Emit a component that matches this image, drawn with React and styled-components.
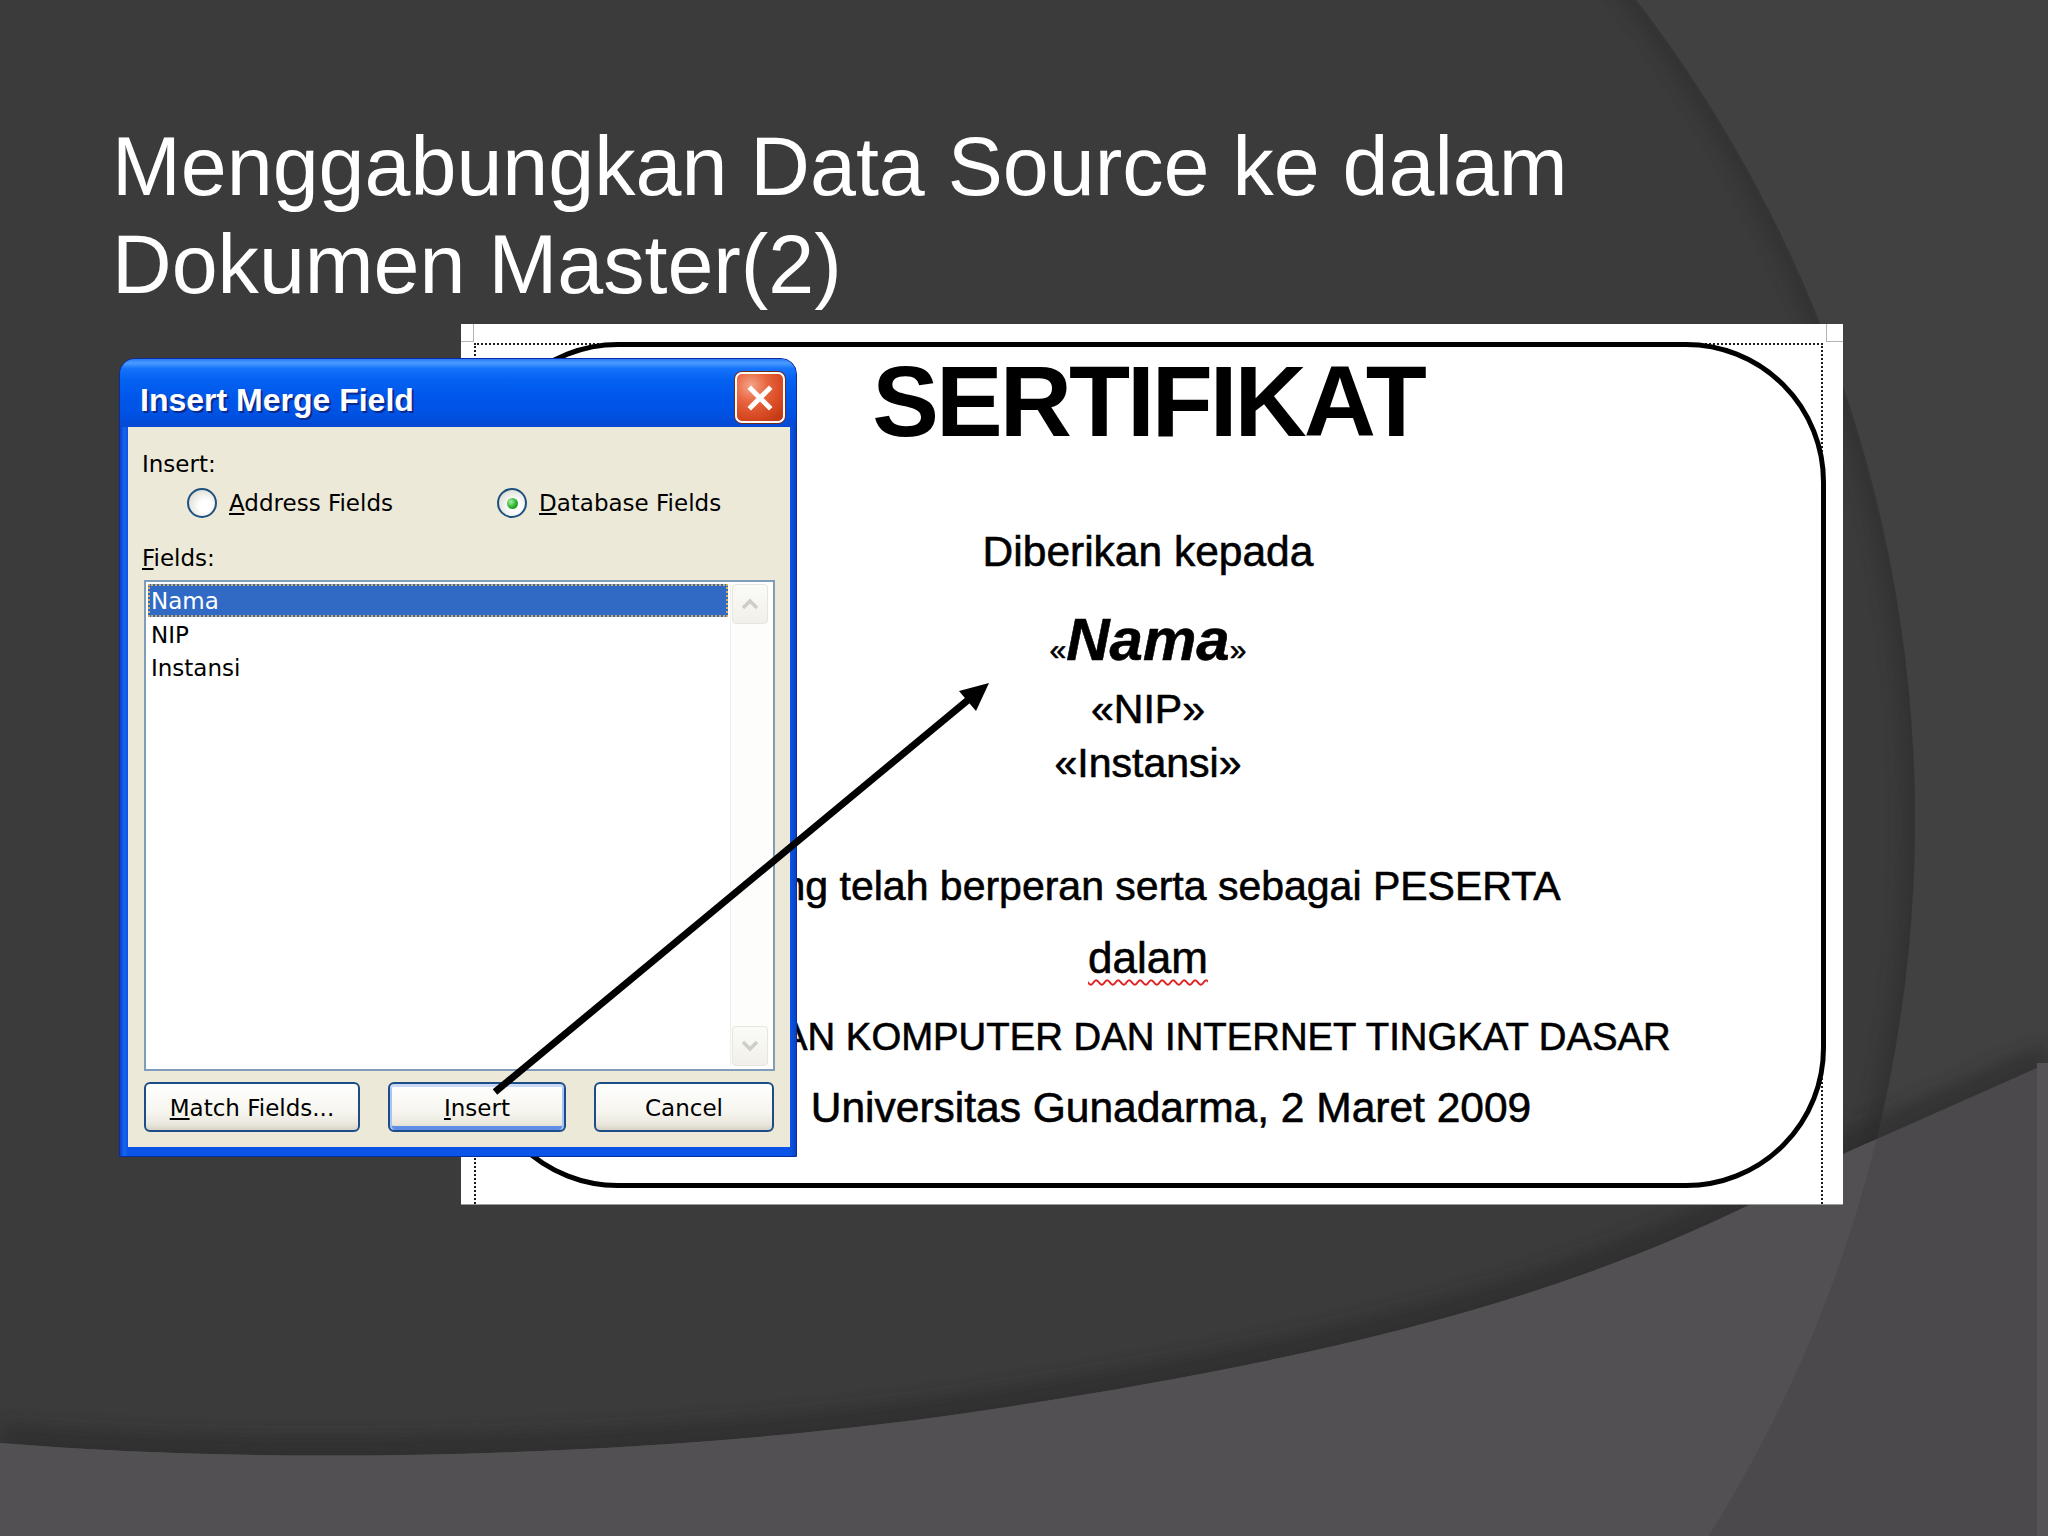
import React from 'react';
import styled, { createGlobalStyle } from 'styled-components';

const GlobalStyle = createGlobalStyle`
  html, body { margin: 0; padding: 0; background: #3b3b3b; }
  #root { width: 2048px; height: 1536px; }
`;

const Slide = styled.div`
  position: relative;
  width: 2048px;
  height: 1536px;
  overflow: hidden;
  background: #3b3b3b;
  font-family: "Liberation Sans", Arial, sans-serif;
`;

const Backdrop = styled.svg`
  position: absolute;
  inset: 0;
  width: 2048px;
  height: 1536px;
`;

const Content = styled.div`
  position: relative;
  display: flex;
  flex-direction: column;
  padding: 118px 0 0 112px;
`;

const Title = styled.h1`
  margin: 0;
  font-family: "Liberation Sans", Arial, sans-serif;
  font-weight: 400;
  font-size: 82.6px;
  line-height: 98px;
  color: #ffffff;
  white-space: nowrap;
`;

const Figure = styled.div`
  position: relative;
  width: 1724px;
  height: 880px;
  margin: 10px 0 0 7px;
  display: flex;
  justify-content: flex-end;
`;

/* ---------- certificate (the Word page) ---------- */

const Certificate = styled.div`
  position: relative;
  width: 1382px;
  height: 880px;
  box-sizing: border-box;
  background: #ffffff;
  padding: 19px 20px 0 13px;
  display: flex;
  box-shadow: 0 1px 0 #9a9a9a;

  &::before,
  &::after {
    content: '';
    position: absolute;
    top: 0;
    height: 17px;
    border-bottom: 1px solid #b4b4b4;
  }
  &::before {
    left: 0;
    width: 12px;
    border-right: 1px solid #b4b4b4;
  }
  &::after {
    right: 0;
    width: 16px;
    border-left: 1px solid #b4b4b4;
  }
`;

const MarginGuide = styled.div`
  flex: 1;
  display: flex;
  border: 2px dotted #1a1a1a;
  border-bottom: none;
`;

const Frame = styled.div`
  flex: 1;
  margin: -3px -5px 16px 2px;
  border: 5px solid #000;
  border-radius: 140px;
  display: flex;
  flex-direction: column;
  align-items: center;
  padding-right: 8px;
  color: #000;
`;

const CertLine = styled.div`
  margin-top: ${p => p.$mt}px;
  margin-left: ${p => p.$ml || 0}px;
  font-family: "Liberation Sans", Arial, sans-serif;
  font-size: ${p => p.$size}px;
  line-height: ${p => p.$lh}px;
  font-weight: ${p => (p.$bold ? 700 : 400)};
  letter-spacing: ${p => p.$ls || 0}px;
  white-space: nowrap;
  -webkit-text-stroke: ${p => (p.$bold ? 0 : 0.6)}px #000;
`;

const Guillemet = styled.span`
  font-size: 30px;
  line-height: 1;
  font-weight: 400;
  font-style: normal;
`;

const FieldName = styled.span`
  font-style: italic;
  font-weight: 700;
`;

const Misspelled = styled.span`
  text-decoration: underline wavy #e02020;
  text-decoration-thickness: 1.5px;
  text-underline-offset: 6px;
`;

/* ---------- XP dialog ---------- */

const Dialog = styled.div`
  position: absolute;
  left: 0;
  top: 34px;
  z-index: 2;
  width: 678px;
  height: 799px;
  box-sizing: border-box;
  display: flex;
  flex-direction: column;
  padding: 0 6px 9px 8px;
  background: linear-gradient(90deg, #0a3fc8 0px, #1665f0 4px, #0a55e8 8px, #0a55e8 calc(100% - 6px), #0743c4 100%);
  border: 1px solid #0a2c9c;
  border-radius: 16px 16px 0 0;
  font-family: "DejaVu Sans", Tahoma, sans-serif;
`;

const TitleBar = styled.div`
  height: 70px;
  margin: 0 -6px 0 -8px;
  padding: 0 11px 0 20px;
  display: flex;
  align-items: flex-start;
  justify-content: space-between;
  border-radius: 15px 15px 0 0;
  background: linear-gradient(180deg,
    #2a7af8 0%, #4a9cff 6%, #1673fb 14%, #0462f2 30%,
    #0057eb 55%, #0052e3 80%, #0449d2 100%);
`;

const TitleText = styled.span`
  margin-top: 21px;
  font-family: "Liberation Sans", Arial, sans-serif;
  font-weight: 700;
  font-size: 32px;
  line-height: 40px;
  color: #ffffff;
  text-shadow: 2px 2px 0 #0c2a8a;
  white-space: nowrap;
`;

const CloseButton = styled.div`
  margin-top: 13px;
  width: 50px;
  height: 51px;
  box-sizing: border-box;
  border: 2px solid #ffffff;
  border-radius: 7px;
  background: radial-gradient(circle at 30% 25%, #f4a58a 0%, #e8643e 35%, #d4461f 70%, #b8330f 100%);
  display: flex;
  align-items: center;
  justify-content: center;
  box-shadow: 0 0 0 1px #7a2a10;
`;

const Body = styled.div`
  flex: 1;
  display: flex;
  flex-direction: column;
  padding: 0 15px 15px 14px;
  background: #ece9d8;
  color: #000;
  font-size: 23px;
`;

const Label = styled.div`
  margin-top: ${p => p.$mt}px;
  line-height: 30px;
  white-space: nowrap;
`;

const RadioRow = styled.div`
  margin-top: 9px;
  padding-left: 45px;
  display: grid;
  grid-template-columns: 310px auto;
  line-height: 30px;
`;

const Option = styled.label`
  display: flex;
  align-items: center;
  gap: 12px;
  white-space: nowrap;
`;

const Radio = styled.span`
  flex: none;
  width: 30px;
  height: 30px;
  box-sizing: border-box;
  border-radius: 50%;
  border: 2px solid #1c5180;
  background: radial-gradient(circle at 62% 62%, #ffffff 25%, #e4e3dc 70%, #c8c7be 100%);
  display: flex;
  align-items: center;
  justify-content: center;

  &::after {
    content: '';
    display: ${p => (p.$checked ? 'block' : 'none')};
    width: 11px;
    height: 11px;
    border-radius: 50%;
    background: radial-gradient(circle at 35% 35%, #a8f0a8 0%, #2bb02b 55%, #187a18 100%);
  }
`;

const ListBox = styled.div`
  margin: 7px 0 0 2px;
  height: 491px;
  box-sizing: border-box;
  display: flex;
  background: #ffffff;
  border: 2px solid #7f9db9;
`;

const Rows = styled.div`
  flex: 1;
  padding: 2px;
  display: flex;
  flex-direction: column;
`;

const Row = styled.div`
  height: 32px;
  line-height: 32px;
  padding: 1px 0 0 3px;
  margin-bottom: 0.5px;
  white-space: nowrap;
  color: ${p => (p.$selected ? '#ffffff' : '#000000')};
  background: ${p => (p.$selected ? '#316ac5' : 'transparent')};
  outline: ${p => (p.$selected ? '2px dotted #d4aa5c' : 'none')};
  outline-offset: -2px;
`;

const ScrollTrack = styled.div`
  width: 38px;
  margin: 2px 4px 3px 0;
  display: flex;
  flex-direction: column;
  justify-content: space-between;
  background: #fdfdfb;
  border-left: 1px solid #f0efe8;
`;

const ScrollButton = styled.div`
  height: 40px;
  margin: 0 1px;
  box-sizing: border-box;
  border: 1px solid #e6e5de;
  border-radius: 4px;
  background: linear-gradient(180deg, #fbfbf8 0%, #f1f0ea 100%);
  display: flex;
  align-items: center;
  justify-content: center;
`;

const ButtonRow = styled.div`
  margin: 11px 0 0 2px;
  display: flex;
  gap: 28px;
`;

const Button = styled.div`
  width: ${p => p.$w}px;
  height: 50px;
  box-sizing: border-box;
  border: 2px solid #1d4d86;
  border-radius: 6px;
  background: linear-gradient(180deg, #ffffff 0%, #f6f5ef 60%, #ebe9df 85%, #d8d3c6 100%);
  display: flex;
  align-items: center;
  justify-content: center;
  font-size: 23px;
  line-height: 30px;
  padding-top: 2px;
  white-space: nowrap;
  box-shadow: ${p => (p.$default
    ? 'inset 0 3px 0 #c8daf8, inset 2px 0 0 #a9c3f4, inset -2px 0 0 #a9c3f4, inset 0 -4px 0 #5f8ee8'
    : 'none')};
`;

const Arrow = styled.svg`
  position: absolute;
  left: 0;
  top: 0;
  z-index: 3;
  width: 1724px;
  height: 880px;
  overflow: visible;
  pointer-events: none;
`;

const bottomCurve = 'M0,1443 C300,1468 700,1455 1000,1408 C1300,1362 1600,1300 1843,1154 L2048,1063';

export default function App() {
  return (
    <Slide>
      <GlobalStyle />
      <Backdrop viewBox="0 0 2048 1536">
        <defs>
          <clipPath id="bigCircle">
            <circle cx="570" cy="820" r="1345" />
          </clipPath>
          <filter id="soft" x="-10%" y="-10%" width="120%" height="120%">
            <feGaussianBlur stdDeviation="8" />
          </filter>
        </defs>
        <rect width="2048" height="1536" fill="#414141" />
        <circle cx="570" cy="820" r="1345" fill="#3b3b3b" />
        <circle cx="570" cy="820" r="1345" fill="none" stroke="#2c2c2c" strokeWidth="26"
          opacity="0.45" filter="url(#soft)" clipPath="url(#bigCircle)" />
        <path d={bottomCurve} fill="none" stroke="#262626" strokeWidth="40" opacity="0.5" filter="url(#soft)" />
        <path d={`${bottomCurve} L2048,1536 L0,1536 Z`} fill="#4b494c" />
        <path d={`${bottomCurve} L2048,1536 L0,1536 Z`} fill="#525053" clipPath="url(#bigCircle)" />
        <rect x="2037" y="1063" width="11" height="473" fill="#555356" />
      </Backdrop>

      <Content>
        <Title>
          Menggabungkan Data Source ke dalam
          <br />
          Dokumen Master(2)
        </Title>

        <Figure>
          <Certificate>
            <MarginGuide>
              <Frame>
                <CertLine $mt={4} $size={100} $lh={100} $bold $ls={-3}>SERTIFIKAT</CertLine>
                <CertLine $mt={76} $size={42.5} $lh={50}>Diberikan kepada</CertLine>
                <CertLine $mt={28} $size={60} $lh={70}>
                  <Guillemet>«</Guillemet>
                  <FieldName>Nama</FieldName>
                  <Guillemet>»</Guillemet>
                </CertLine>
                <CertLine $mt={9} $size={41} $lh={50}>«NIP»</CertLine>
                <CertLine $mt={4} $size={41} $lh={50}>«Instansi»</CertLine>
                <CertLine $mt={73} $size={41} $lh={50}>Yang telah berperan serta sebagai PESERTA</CertLine>
                <CertLine $mt={22} $size={44} $lh={50}><Misspelled>dalam</Misspelled></CertLine>
                <CertLine $mt={29} $size={38.3} $lh={50}>PELATIHAN KOMPUTER DAN INTERNET TINGKAT DASAR</CertLine>
                <CertLine $mt={21} $size={42.5} $lh={50} $ml={46}>Universitas Gunadarma, 2 Maret 2009</CertLine>
              </Frame>
            </MarginGuide>
          </Certificate>

          <Dialog>
            <TitleBar>
              <TitleText>Insert Merge Field</TitleText>
              <CloseButton>
                <svg width="30" height="30" viewBox="0 0 30 30">
                  <path d="M6 6 L24 24 M24 6 L6 24" stroke="#ffffff" strokeWidth="5" strokeLinecap="square" />
                </svg>
              </CloseButton>
            </TitleBar>
            <Body>
              <Label $mt={22}>Insert:</Label>
              <RadioRow>
                <Option><Radio /><span><u>A</u>ddress Fields</span></Option>
                <Option><Radio $checked /><span><u>D</u>atabase Fields</span></Option>
              </RadioRow>
              <Label $mt={25}><u>F</u>ields:</Label>
              <ListBox>
                <Rows>
                  <Row $selected>Nama</Row>
                  <Row>NIP</Row>
                  <Row>Instansi</Row>
                </Rows>
                <ScrollTrack>
                  <ScrollButton>
                    <svg width="20" height="14" viewBox="0 0 20 14">
                      <path d="M3 11 L10 4 L17 11" fill="none" stroke="#cfcec6" strokeWidth="3.5" />
                    </svg>
                  </ScrollButton>
                  <ScrollButton>
                    <svg width="20" height="14" viewBox="0 0 20 14">
                      <path d="M3 3 L10 10 L17 3" fill="none" stroke="#cfcec6" strokeWidth="3.5" />
                    </svg>
                  </ScrollButton>
                </ScrollTrack>
              </ListBox>
              <ButtonRow>
                <Button $w={216}><span><u>M</u>atch Fields...</span></Button>
                <Button $w={178} $default><span><u>I</u>nsert</span></Button>
                <Button $w={180}>Cancel</Button>
              </ButtonRow>
            </Body>
          </Dialog>

          <Arrow viewBox="0 0 1724 880">
            <line x1="376" y1="768" x2="849" y2="376" stroke="#000" strokeWidth="7" />
            <polygon points="870,359 857,387 840,367" fill="#000" />
          </Arrow>
        </Figure>
      </Content>
    </Slide>
  );
}
